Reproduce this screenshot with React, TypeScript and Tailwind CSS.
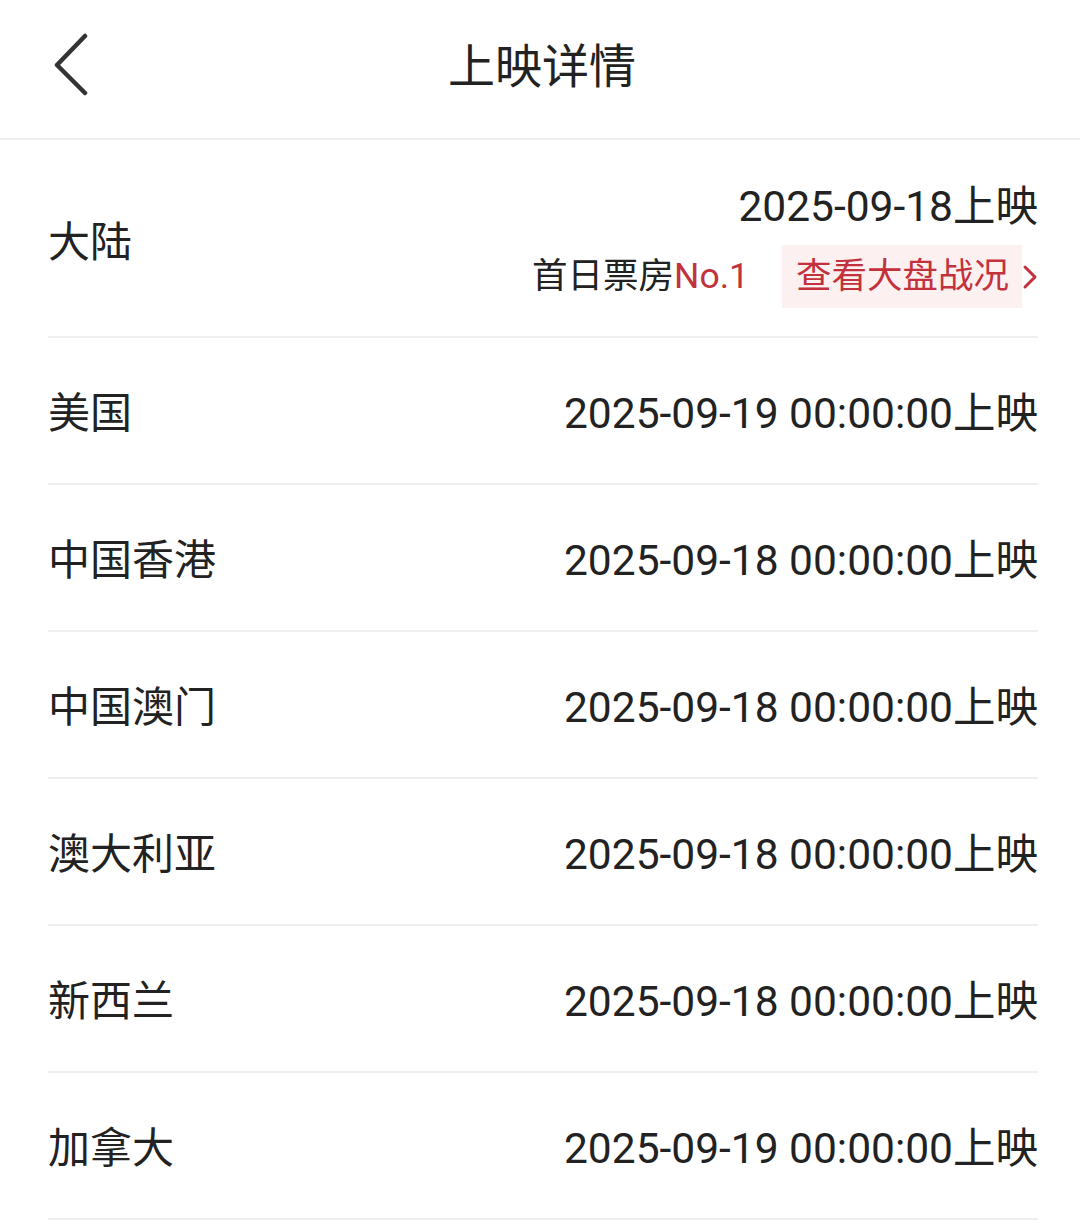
import React from "react";

const rows = [
  { name: "美国", date: "2025-09-19 00:00:00上映" },
  { name: "中国香港", date: "2025-09-18 00:00:00上映" },
  { name: "中国澳门", date: "2025-09-18 00:00:00上映" },
  { name: "澳大利亚", date: "2025-09-18 00:00:00上映" },
  { name: "新西兰", date: "2025-09-18 00:00:00上映" },
  { name: "加拿大", date: "2025-09-19 00:00:00上映" },
];

export default function App() {
  return (
    <div
      className="w-[1080px] h-[1224px] bg-white text-[#222222] overflow-hidden"
      style={{ fontFamily: 'Roboto, "Noto Sans CJK SC", sans-serif' }}
    >
      <header className="relative h-[140px] border-b-2 border-[#eeeeee] flex items-center justify-center">
        <svg
          className="absolute left-[50px] top-[32px]"
          width="44"
          height="64"
          viewBox="0 0 44 64"
          fill="none"
        >
          <path d="M35 4 L7 33 L35 61" stroke="#333333" strokeWidth="4.5" strokeLinecap="round" strokeLinejoin="round" />
        </svg>
        <h1 className="text-[47px] leading-none font-normal -mt-[6px] pl-[4px]">上映详情</h1>
      </header>
      <div className="pl-[48px] pr-[42px]">
        <div className="h-[198px] border-b-2 border-[#eeeeee] flex items-center justify-between">
          <div className="text-[42px] leading-none pt-[10px]">大陆</div>
          <div className="flex flex-col items-end pt-[18px]">
            <div className="text-[42.5px] leading-none">2025-09-18上映</div>
            <div className="flex items-center mt-[17px]">
              <span className="text-[35.5px] leading-none">
                首日票房<span className="text-[#c2323c]">No.1</span>
              </span>
              <div className="ml-[33px] h-[63px] bg-[#fdf0f0] flex items-center pl-[14px] pr-[13px]">
                <span className="text-[35.5px] leading-none text-[#c2323c]">查看大盘战况</span>
              </div>
              <svg width="16" height="30" viewBox="0 0 16 30" fill="none">
                <path d="M3 5 L13 15 L3 25" stroke="#c2323c" strokeWidth="3" strokeLinecap="round" strokeLinejoin="round" />
              </svg>
            </div>
          </div>
        </div>
        {rows.map((r) => (
          <div
            key={r.name}
            className="h-[147px] border-b-2 border-[#eeeeee] flex items-center justify-between pt-[7px]"
          >
            <div className="text-[42px] leading-none">{r.name}</div>
            <div className="text-[42.5px] leading-none">{r.date}</div>
          </div>
        ))}
      </div>
    </div>
  );
}
